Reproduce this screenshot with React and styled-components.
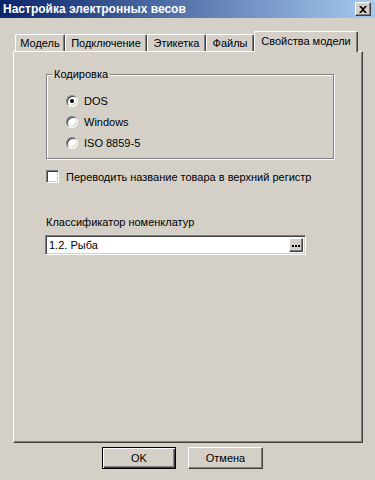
import React from 'react';
import styled, { createGlobalStyle } from 'styled-components';

const GlobalStyle = createGlobalStyle`
  html, body {
    margin: 0;
    padding: 0;
    background: #d4d0c8;
  }
  body {
    font-family: "Liberation Sans", Arial, sans-serif;
    font-size: 11px;
    color: #000;
  }
`;

const Window = styled.div`
  width: 375px;
  height: 480px;
  background: #d4d0c8;
  display: flex;
  flex-direction: column;
  overflow: hidden;
`;

const TitleBar = styled.div`
  height: 18px;
  display: flex;
  align-items: center;
  justify-content: space-between;
  padding: 0 3px 0 3px;
  background: linear-gradient(to right, #0a246a, #a6caf0);
  color: #fff;
  font-weight: bold;
  font-size: 12px;
`;

const CloseButton = styled.div`
  width: 14px;
  height: 12px;
  box-sizing: content-box;
  display: flex;
  align-items: center;
  justify-content: center;
  background: #d4d0c8;
  border-top: 1px solid #fff;
  border-left: 1px solid #fff;
  border-right: 1px solid #404040;
  border-bottom: 1px solid #404040;
  box-shadow: inset -1px -1px #808080;
  margin-right: 1px;
`;

const Body = styled.div`
  flex: 1;
  display: flex;
  flex-direction: column;
  padding: 13px 0 0 13px;
`;

const TabRow = styled.div`
  display: flex;
  align-items: flex-end;
  height: 21px;
  padding-left: 2px;
  margin-bottom: -1px;
  position: relative;
  z-index: 1;
`;

const Tab = styled.div`
  box-sizing: border-box;
  width: ${p => p.$w}px;
  height: ${p => (p.$active ? 21 : 17)}px;
  margin-bottom: ${p => (p.$active ? 0 : 1)}px;
  display: flex;
  align-items: ${p => (p.$active ? 'flex-start' : 'center')};
  padding-top: ${p => (p.$active ? 3 : 0)}px;
  justify-content: center;
  background: #d4d0c8;
  border-top: 1px solid #fff;
  border-left: 1px solid #fff;
  border-right: 1px solid #404040;
  border-top-left-radius: 2px;
  border-top-right-radius: 2px;
  box-shadow: inset -1px 0 #808080;
  white-space: nowrap;
`;

const Panel = styled.div`
  box-sizing: border-box;
  width: 350px;
  height: 392px;
  border-top: 1px solid #fff;
  border-left: 1px solid #fff;
  border-right: 1px solid #404040;
  border-bottom: 1px solid #404040;
  box-shadow: inset -1px -1px #808080;
  padding: 22px 0 0 32px;
  display: flex;
  flex-direction: column;
`;

const GroupBox = styled.div`
  position: relative;
  box-sizing: border-box;
  width: 288px;
  height: 85px;
  border: 1px solid #808080;
  box-shadow: inset 1px 1px #fff, 1px 1px #fff;
  padding: 15px 0 0 19px;
  display: flex;
  flex-direction: column;
`;

const Legend = styled.span`
  position: absolute;
  top: -7px;
  left: 5px;
  padding: 0 2px;
  background: #d4d0c8;
  line-height: 13px;
`;

const OptionRow = styled.div`
  height: 21px;
  display: flex;
  align-items: center;
  gap: 6px;
`;

const Radio = styled.span`
  box-sizing: border-box;
  width: 12px;
  height: 12px;
  border-radius: 50%;
  background: #fff;
  border: 1px solid;
  border-color: #808080 #fff #fff #808080;
  box-shadow: inset 1px 1px #404040, inset -1px -1px #d4d0c8;
  display: flex;
  align-items: center;
  justify-content: center;

  &::after {
    content: '';
    width: 4px;
    height: 4px;
    border-radius: 50%;
    background: ${p => (p.$checked ? '#000' : 'transparent')};
  }
`;

const CheckRow = styled.div`
  margin-top: 11px;
  height: 13px;
  display: flex;
  align-items: center;
  gap: 7px;
`;

const CheckBox = styled.span`
  box-sizing: border-box;
  width: 13px;
  height: 13px;
  background: #fff;
  border: 1px solid;
  border-color: #808080 #fff #fff #808080;
  box-shadow: inset 1px 1px #404040, inset -1px -1px #d4d0c8;
`;

const FieldLabel = styled.div`
  margin-top: 33px;
  line-height: 13px;
`;

const Field = styled.div`
  box-sizing: border-box;
  margin-top: 6px;
  margin-left: -1px;
  width: 261px;
  height: 20px;
  background: #fff;
  border: 1px solid;
  border-color: #808080 #fff #fff #808080;
  box-shadow: inset 1px 1px #404040, inset -1px -1px #d4d0c8;
  display: flex;
  align-items: center;
  justify-content: space-between;
  padding: 0 2px 0 3px;
`;

const EllipsisButton = styled.div`
  box-sizing: border-box;
  width: 14px;
  height: 14px;
  background: #d4d0c8;
  border-top: 1px solid #fff;
  border-left: 1px solid #fff;
  border-right: 1px solid #404040;
  border-bottom: 1px solid #404040;
  box-shadow: inset -1px -1px #808080;
  display: flex;
  align-items: center;
  justify-content: center;
  gap: 1px;
  padding-top: 2px;
`;

const Dot = styled.span`
  width: 2px;
  height: 2px;
  background: #000;
`;

const ButtonRow = styled.div`
  display: flex;
  gap: 12px;
  padding: 4px 0 0 89px;
`;

const Button = styled.div`
  box-sizing: border-box;
  width: ${p => (p.$default ? 74 : 75)}px;
  height: 22px;
  display: flex;
  align-items: center;
  justify-content: center;
  background: #d4d0c8;
  border: 1px solid;
  border-color: ${p => (p.$default ? '#000' : '#fff #404040 #404040 #fff')};
  box-shadow: ${p =>
    p.$default
      ? 'inset 1px 1px #fff, inset -1px -1px #404040, inset -2px -2px #808080'
      : 'inset -1px -1px #808080'};
  font-size: 11px;
`;

const tabs = [
  { label: 'Модель', w: 50 },
  { label: 'Подключение', w: 82 },
  { label: 'Этикетка', w: 59 },
  { label: 'Файлы', w: 48 },
  { label: 'Свойства модели', w: 104, active: true },
];

const encodings = [
  { label: 'DOS', checked: true },
  { label: 'Windows' },
  { label: 'ISO 8859-5' },
];

export default function App() {
  return (
    <Window>
      <GlobalStyle />
      <TitleBar>
        <span>Настройка электронных весов</span>
        <CloseButton>
          <svg width="8" height="7" viewBox="0 0 8 7">
            <path d="M0 0h2l2 2 2-2h2L5 3.5 8 7H6L4 5 2 7H0l3-3.5z" fill="#000" />
          </svg>
        </CloseButton>
      </TitleBar>
      <Body>
        <TabRow>
          {tabs.map(t => (
            <Tab key={t.label} $w={t.w} $active={t.active}>
              {t.label}
            </Tab>
          ))}
        </TabRow>
        <Panel>
          <GroupBox>
            <Legend>Кодировка</Legend>
            {encodings.map(e => (
              <OptionRow key={e.label}>
                <Radio $checked={e.checked} />
                <span>{e.label}</span>
              </OptionRow>
            ))}
          </GroupBox>
          <CheckRow>
            <CheckBox />
            <span>Переводить название товара в верхний регистр</span>
          </CheckRow>
          <FieldLabel>Классификатор номенклатур</FieldLabel>
          <Field>
            <span>1.2. Рыба</span>
            <EllipsisButton>
              <Dot />
              <Dot />
              <Dot />
            </EllipsisButton>
          </Field>
        </Panel>
        <ButtonRow>
          <Button $default>OK</Button>
          <Button>Отмена</Button>
        </ButtonRow>
      </Body>
    </Window>
  );
}
